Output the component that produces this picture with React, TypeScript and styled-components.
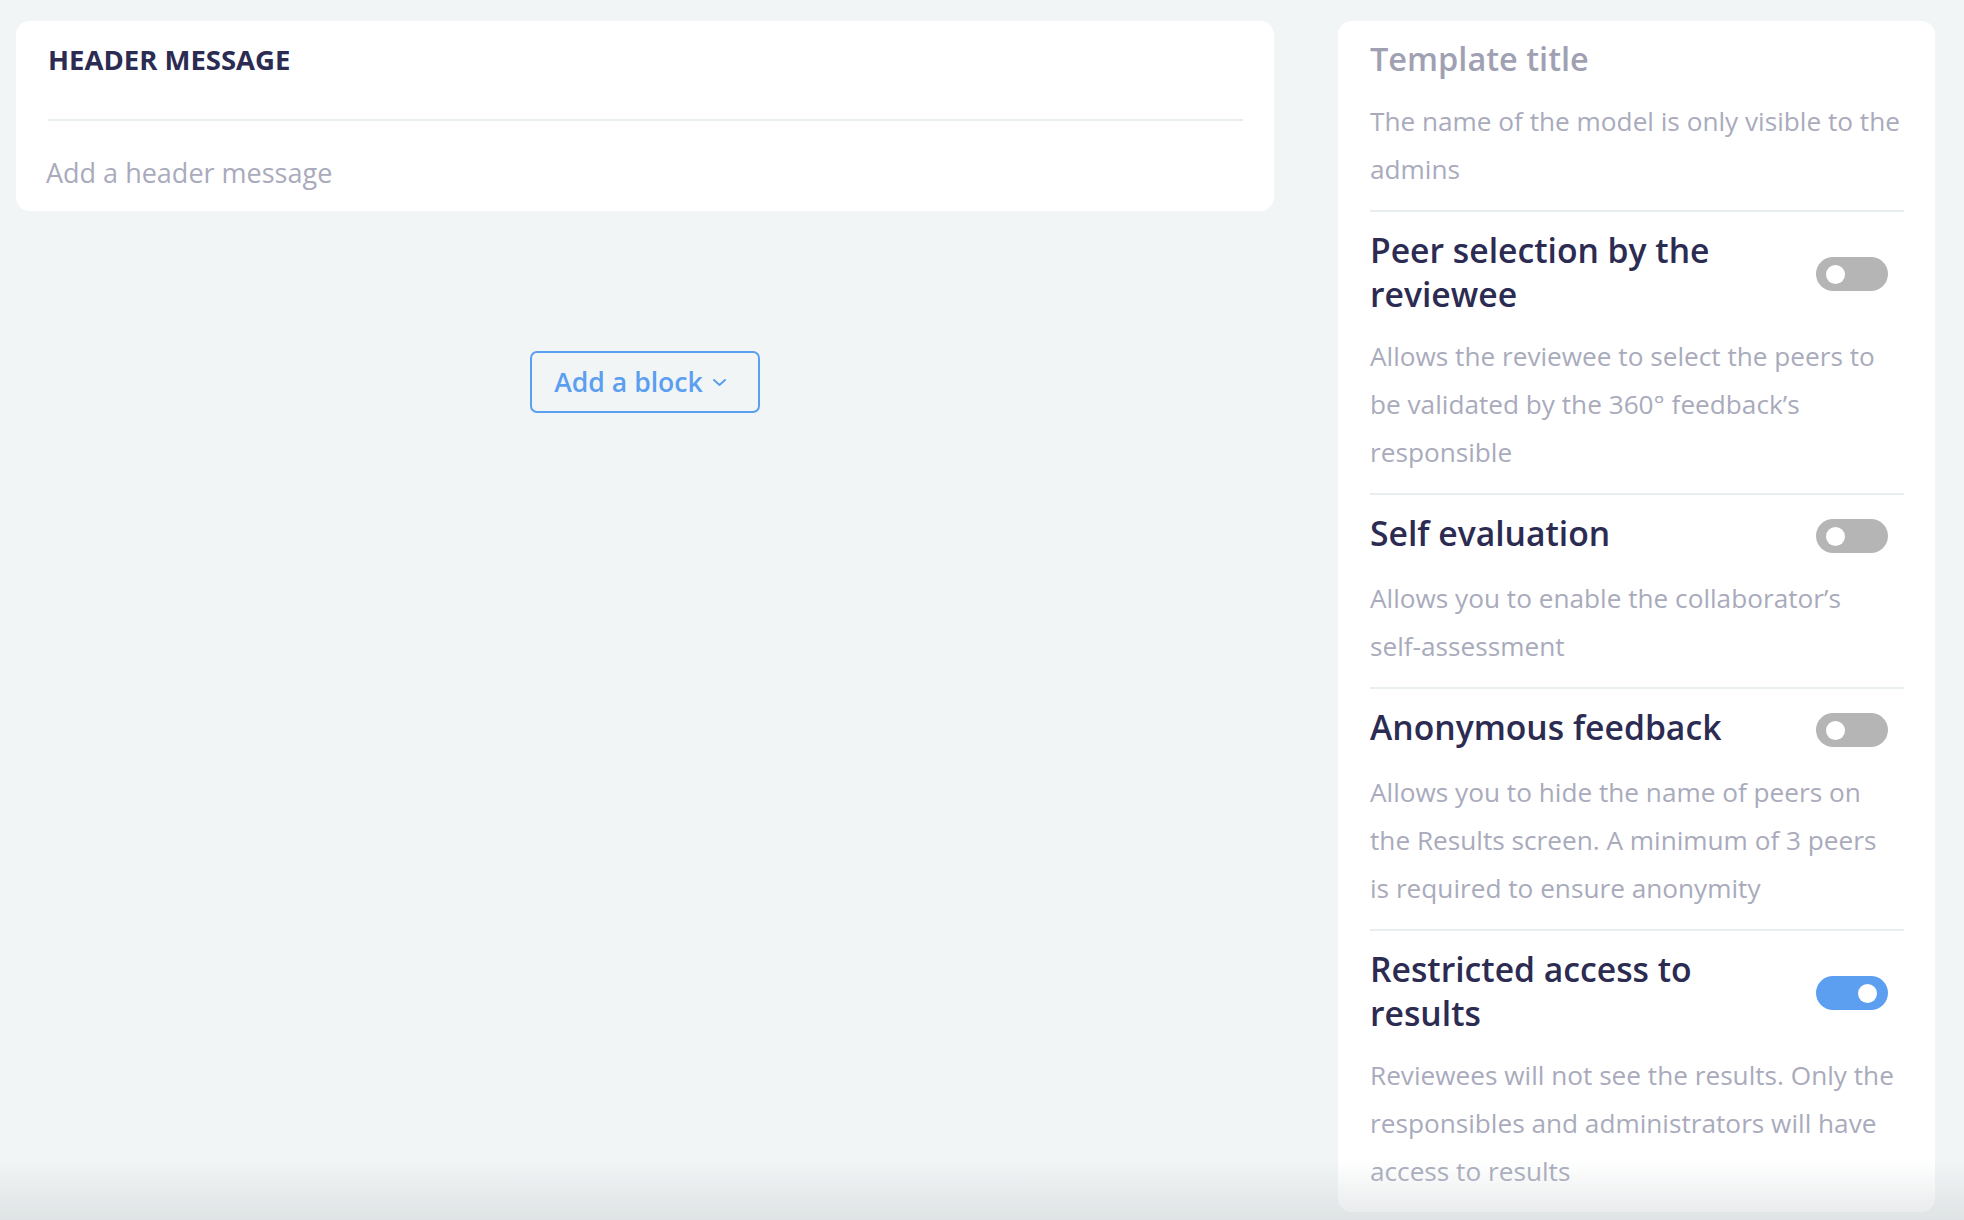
import React from "react";
import styled, { createGlobalStyle } from "styled-components";

const GlobalStyle = createGlobalStyle`
	html, body {
		margin: 0;
		padding: 0;
		background: #f2f5f6;
		font-family: "Open Sans", "Lato", sans-serif;
		-webkit-font-smoothing: antialiased;
	}
	* { box-sizing: border-box; }
`;

const Page = styled.div`
	display: flex;
	align-items: flex-start;
	gap: 64px;
	min-height: 100vh;
	padding: 21px 29px 0 16px;
`;

const Main = styled.main`
	flex: 1;
	display: flex;
	flex-direction: column;
	align-items: center;
	gap: 140px;
`;

const Card = styled.section`
	width: 100%;
	background: #fff;
	border-radius: 14px;
`;

const HeaderCard = styled(Card)`
	padding: 0 31px 14px 32px;
`;

const HeaderLabel = styled.h2`
	margin: 0;
	padding: 23px 0 43px;
	border-bottom: 2px solid #e8edef;
	font-size: 27.5px;
	line-height: 32px;
	font-weight: 700;
	color: #2c2b52;
	text-transform: uppercase;
`;

const Placeholder = styled.div`
	padding-top: 28px;
	margin-left: -2px;
	font-size: 27px;
	line-height: 48px;
	color: #a9abbc;
`;

const AddButton = styled.button`
	display: inline-flex;
	align-items: center;
	gap: 9px;
	height: 62px;
	padding: 0 31px 0 22px;
	border: 2px solid #5c9ff0;
	border-radius: 7px;
	background: transparent;
	color: #5c9ff0;
	font-family: inherit;
	font-size: 26.6px;
	font-weight: 600;
	cursor: pointer;
`;

const Sidebar = styled(Card)`
	width: 597px;
	flex-shrink: 0;
	padding: 0 31px 0 32px;
`;

const Setting = styled.div`
	padding: 16px 0 17px;
	& + & {
		border-top: 2px solid #e8edef;
	}
`;

const SettingHead = styled.div`
	display: flex;
	align-items: center;
	justify-content: space-between;
	min-height: 47px;
`;

const SettingTitle = styled.h3<{ $muted?: boolean }>`
	align-self: flex-start;
	margin: 0;
	max-width: 400px;
	font-size: ${(p) => (p.$muted ? "32.5px" : "33.7px")};
	line-height: 44px;
	font-weight: 600;
	color: ${(p) => (p.$muted ? "#9fa1b3" : "#2c2b52")};
`;

const SettingText = styled.p`
	margin: 16px 0 0;
	font-size: 26.2px;
	line-height: 48px;
	color: #a9abbc;
`;

const NoWrap = styled.span`
	white-space: nowrap;
`;

const Toggle = styled.span<{ $on?: boolean }>`
	position: relative;
	flex-shrink: 0;
	width: 72px;
	height: 34px;
	margin: 3px 16px 0 0;
	border-radius: 17px;
	background: ${(p) => (p.$on ? "#5c9ff0" : "#b5b5b5")};
	&::after {
		content: "";
		position: absolute;
		top: 8px;
		left: ${(p) => (p.$on ? "42px" : "10px")};
		width: 19px;
		height: 19px;
		border-radius: 50%;
		background: #fff;
	}
`;

const BottomShade = styled.div`
	position: fixed;
	left: 0;
	right: 0;
	bottom: 0;
	height: 60px;
	pointer-events: none;
	background: linear-gradient(rgba(200, 206, 208, 0), rgba(200, 206, 208, 0.45));
`;

const settings: { title: string; text: React.ReactNode; on: boolean }[] = [
	{
		title: "Peer selection by the reviewee",
		text: "Allows the reviewee to select the peers to be validated by the 360° feedback’s responsible",
		on: false,
	},
	{
		title: "Self evaluation",
		text: (
			<>
				Allows you to enable the collaborator’s <NoWrap>self-assessment</NoWrap>
			</>
		),
		on: false,
	},
	{
		title: "Anonymous feedback",
		text: (
			<>
				Allows you to hide the name of peers on the Results screen. A minimum of 3 peers{" "}
				<NoWrap>is required</NoWrap> to ensure anonymity
			</>
		),
		on: false,
	},
	{
		title: "Restricted access to results",
		text: "Reviewees will not see the results. Only the responsibles and administrators will have access to results",
		on: true,
	},
];

export default function App() {
	return (
		<>
			<GlobalStyle />
			<Page>
				<Main>
					<HeaderCard>
						<HeaderLabel>Header message</HeaderLabel>
						<Placeholder>Add a header message</Placeholder>
					</HeaderCard>
					<AddButton>
						Add a block
						<svg width="15" height="9" viewBox="0 0 15 9" fill="none">
							<path d="M2 2l5.5 5 5.5-5" stroke="currentColor" strokeWidth="2" strokeLinecap="round" strokeLinejoin="round" />
						</svg>
					</AddButton>
				</Main>
				<Sidebar>
					<Setting>
						<SettingTitle $muted>Template title</SettingTitle>
						<SettingText>The name of the model is only visible to the admins</SettingText>
					</Setting>
					{settings.map((s) => (
						<Setting key={s.title}>
							<SettingHead>
								<SettingTitle>{s.title}</SettingTitle>
								<Toggle $on={s.on} />
							</SettingHead>
							<SettingText>{s.text}</SettingText>
						</Setting>
					))}
				</Sidebar>
			</Page>
			<BottomShade />
		</>
	);
}
